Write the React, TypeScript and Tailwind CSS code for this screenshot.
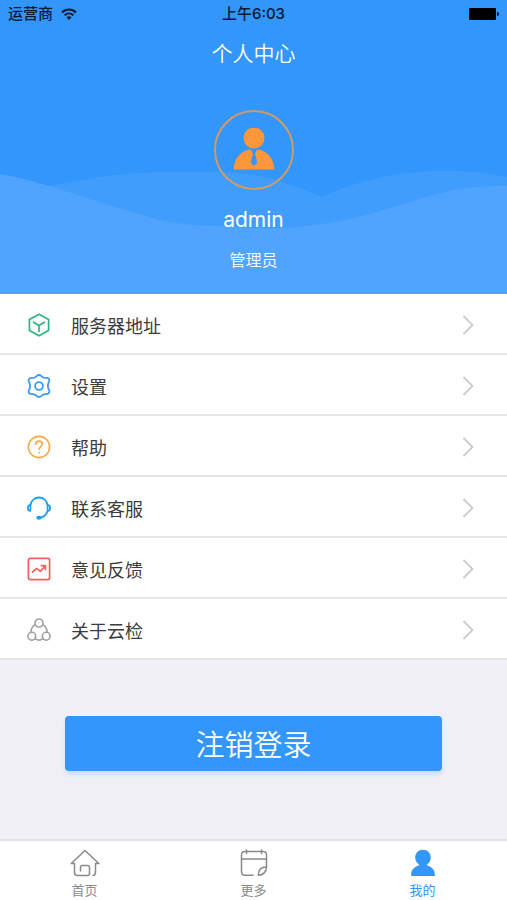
// src/pages/Profile.tsx
import { useState } from 'react';
import type { ReactNode } from 'react';

const menuItems: { label: string; icon: ReactNode }[] = [
    {
        label: '服务器地址',
        icon: (
            <svg viewBox="0 0 24 24" className="h-6 w-6" fill="none" stroke="#2cb67d" strokeWidth="1.7" strokeLinejoin="round" strokeLinecap="round">
                <path d="M12 1.2 21.6 6.4v11.2L12 22.8 2.4 17.6V6.4z" />
                <path d="M6.6 9.2 12 12.4l5.4-3.2M12 12.4v6" />
            </svg>
        ),
    },
    {
        label: '设置',
        icon: (
            <svg viewBox="0 0 24 24" className="h-6 w-6" fill="none" stroke="#3f97f8" strokeWidth="1.8" strokeLinejoin="round">
                <path d="M9.6 2.1Q12-.1 14.4 2.1q2 2.2 4.600 1.800 2.900-.2 3.400 2.200.2 1.200-.8 2.600-1.400 3.300 0 6.600 1 1.400.8 2.600-.5 2.400-3.400 2.200-2.600-.4-4.600 1.800-2.400 2.200-4.800 0-2-2.200-4.600-1.800-2.900.2-3.400-2.200-.2-1.200.8-2.600 1.400-3.300 0-6.600-1-1.400-.8-2.600.5-2.400 3.400-2.200 2.600.4 4.600-1.800z" />
                <circle cx="12" cy="12" r="3.900" />
            </svg>
        ),
    },
    {
        label: '帮助',
        icon: (
            <svg viewBox="0 0 24 24" className="h-6 w-6" fill="none" stroke="#f9a94b" strokeWidth="1.6" strokeLinecap="round">
                <circle cx="12" cy="12" r="10.6" />
                <path d="M8.7 9.4c0-2 1.4-3.3 3.3-3.3s3.3 1.3 3.3 3.1c0 2.3-3.2 2.6-3.2 5.2" />
                <circle cx="12.1" cy="17.6" r=".6" fill="#f9a94b" strokeWidth=".8" />
            </svg>
        ),
    },
    {
        label: '联系客服',
        icon: (
            <svg viewBox="0 0 24 24" className="h-6 w-6" fill="none" stroke="#1ba1ee" strokeWidth="1.8" strokeLinecap="round" strokeLinejoin="round">
                <path d="M3.4 9.2C4.2 4.6 7.6 1.5 12 1.5s7.8 3.1 8.6 7.7M20.6 14.8c-.9 3.4-3.4 6-6.9 6.8" />
                <path d="M3.4 9.2v5.6C1.5 15 .9 13.9.9 12s.6-3 2.5-2.8zM20.6 9.2v5.6c1.9.2 2.5-.9 2.5-2.8s-.6-3-2.5-2.8z" />
                <ellipse cx="12" cy="21.8" rx="1.8" ry="1.1" fill="#1ba1ee" />
            </svg>
        ),
    },
    {
        label: '意见反馈',
        icon: (
            <svg viewBox="0 0 24 24" className="h-6 w-6" fill="none" stroke="#f1605f" strokeWidth="1.7" strokeLinecap="round" strokeLinejoin="round">
                <rect x="1.4" y="1.4" width="21.2" height="21.2" rx="1.8" />
                <path d="m5.4 15.2 4.2-3.9 3.6 3 4.9-5.2M14.4 8.6h4v3.8" />
            </svg>
        ),
    },
    {
        label: '关于云检',
        icon: (
            <svg viewBox="0 0 24 24" className="h-6 w-6" fill="none" stroke="#a0a0a0" strokeWidth="1.6" strokeLinecap="round">
                <circle cx="12" cy="5" r="4" />
                <circle cx="4.8" cy="18.2" r="3.9" />
                <circle cx="19.2" cy="18.2" r="3.9" />
                <path d="M8.2 6.6c-2.6 1.7-4.2 4.3-4.3 7.5M15.8 6.6c2.6 1.7 4.2 4.3 4.3 7.5M8 20.7c2.6 1.900 5.400 1.900 8 0" />
            </svg>
        ),
    },
];

const tabs: { label: string; icon: ReactNode }[] = [
    {
        label: '首页',
        icon: (
            <svg viewBox="0 0 30 28" className="h-7 w-[30px]" fill="none" stroke="currentColor" strokeWidth="1.5" strokeLinecap="round" strokeLinejoin="round">
                <path d="M4.5 14.5H1.2L15 1.5l13.8 13h-3.300v8.700q0 3-2.500 3.300M4.500 14.500v9q0 3 3 3h10q2 0 2-2v-6q0-2-2-2h-5q-2 0-2 2v3.500" />
            </svg>
        ),
    },
    {
        label: '更多',
        icon: (
            <svg viewBox="0 0 30 28" className="h-7 w-[30px]" fill="none" stroke="currentColor" strokeWidth="1.5" strokeLinecap="round" strokeLinejoin="round">
                <path d="M14 26.200H6q-3.500 0-3.500-3.500V6q0-3.500 3.500-3.500h18q3.500 0 3.500 3.500v12M2.500 10h25M7.500 1v3.500M22.500 1v3.500" />
                <path d="M27.500 18c0 4.800-3.400 8.200-8.200 8.200 0-5.300 2.900-8.200 8.200-8.200z" />
            </svg>
        ),
    },
    {
        label: '我的',
        icon: (
            <svg viewBox="0 0 30 28" className="h-7 w-[30px]" fill="currentColor">
                <path d="M15 .8c4.600 0 7.800 3.400 7.800 7.800 0 2.900-1.500 5.300-3.600 6.600v1.400c4.600 1.300 7.600 4.600 7.600 8.600v1.800H3.200v-1.800c0-4 3-7.300 7.600-8.600v-1.400c-2.100-1.300-3.600-3.700-3.600-6.600C7.200 4.200 10.400.8 15 .8z" />
            </svg>
        ),
    },
];

function StatusBar() {
    return (
        <div className="grid h-7 grid-cols-3 items-center px-2 text-[15px] font-medium text-[#071a33]">
            <div className="flex items-center gap-2">
                <span>运营商</span>
                <svg viewBox="0 0 16 12" className="h-3 w-4" fill="none" stroke="#071a33" strokeWidth="2">
                    <path d="M1 4.500c4-4 10-4 14 0M3.600 7.300c2.600-2.500 6.200-2.500 8.800 0" />
                    <path d="M8 12 5.500 9.300c1.400-1.300 3.600-1.300 5 0z" fill="#071a33" stroke="none" />
                </svg>
            </div>
            <span className="text-center">上午6:03</span>
            <svg viewBox="0 0 30 12" className="h-3 w-[30px] justify-self-end" fill="#000000">
                <rect x="0" y="0" width="27" height="12" rx="1" />
                <path d="M28 4q2 0 2 2t-2 2z" />
            </svg>
        </div>
    );
}

function ProfileHeader() {
    return (
        <header className="relative bg-[#3296fb] text-white">
            {/* Wave background */}
            <svg viewBox="0 0 507 124" preserveAspectRatio="none" className="absolute bottom-0 left-0 h-[124px] w-full">
                <path d="M0 24C55 17 100 2 165 2c75 0 90-3 157 25C375 1 450-6 507 7v117H0z" fill="#419dfc" />
                <path d="M0 4c40 7 85 24 125 36 35 11 55 16 95 16 60 6 110 0 160-15 45-13 75-26 127-25v108H0z" fill="#50a4fd" />
            </svg>

            <div className="relative">
                <StatusBar />
                <h1 className="text-center text-[21px] leading-[52px] font-[350]">个人中心</h1>
                <div className="flex flex-col items-center pt-[30px] pb-[22px]">
                    <div className="flex h-20 w-20 items-center justify-center rounded-full border-2 border-[#cf9a68]">
                        <svg viewBox="0 0 44 44" className="h-11 w-11" fill="#fe963b">
                            <circle cx="22" cy="10" r="10.500" />
                            <path d="M1.500 41.500C2 31 9 22.500 18 21.500l4 2.500 4-2.500C35 22.500 42 31 42.500 41.500z" />
                            <path d="m19.500 21.500 2.500 1.500 2.500-1.500-1.300 4.500L25.300 34.500 22 38 18.700 34.500l2.100-8.500z" fill="#3296fb" />
                        </svg>
                    </div>
                    <p className="mt-4 font-['Inter',sans-serif] text-[21px] leading-7">admin</p>
                    <p className="mt-[14px] text-base leading-6 font-[350]">管理员</p>
                </div>
            </div>
        </header>
    );
}

export default function App() {
    const [activeTab, setActiveTab] = useState('我的');

    return (
        <div className="flex min-h-screen flex-col bg-[#f1f0f6] font-['Inter','Noto_Sans_CJK_SC',sans-serif]">
            <ProfileHeader />

            {/* Menu */}
            <ul className="bg-white font-['Noto_Sans_CJK_SC',sans-serif]">
                {menuItems.map((item) => (
                    <li key={item.label} className="border-b-2 border-[#e6e6e8]">
                        <button className="flex h-[59px] w-full items-center pt-[2px] pr-[33px] pl-[27px] text-left">
                            {item.icon}
                            <span className="ml-5 flex-1 text-lg text-[#3c3c3c]">{item.label}</span>
                            <svg viewBox="0 0 12 20" className="h-5 w-3" fill="none" stroke="#cbcbcd" strokeWidth="1.800">
                                <path d="m1.500 1 9 9-9 9" />
                            </svg>
                        </button>
                    </li>
                ))}
            </ul>

            {/* Logout */}
            <main className="flex-1 px-[65px] pt-14 pb-10">
                <button className="h-[55px] w-full rounded-sm bg-[#3296fb] font-['Noto_Sans_CJK_SC',sans-serif] text-[29px] font-[350] text-white shadow-[0_4px_4px_#cbdffa]">
                    注销登录
                </button>
            </main>

            {/* Bottom tabs */}
            <nav className="grid h-[61px] grid-cols-3 border-t-2 border-[#e3e2e8] bg-white">
                {tabs.map((tab) => (
                    <button
                        key={tab.label}
                        onClick={() => setActiveTab(tab.label)}
                        className={`flex flex-col items-center pt-2 text-[13px] leading-5 ${activeTab === tab.label ? 'text-[#3296fb]' : 'text-[#8a8a8a]'}`}
                    >
                        {tab.icon}
                        <span className="pt-[3px]">{tab.label}</span>
                    </button>
                ))}
            </nav>
        </div>
    );
}
